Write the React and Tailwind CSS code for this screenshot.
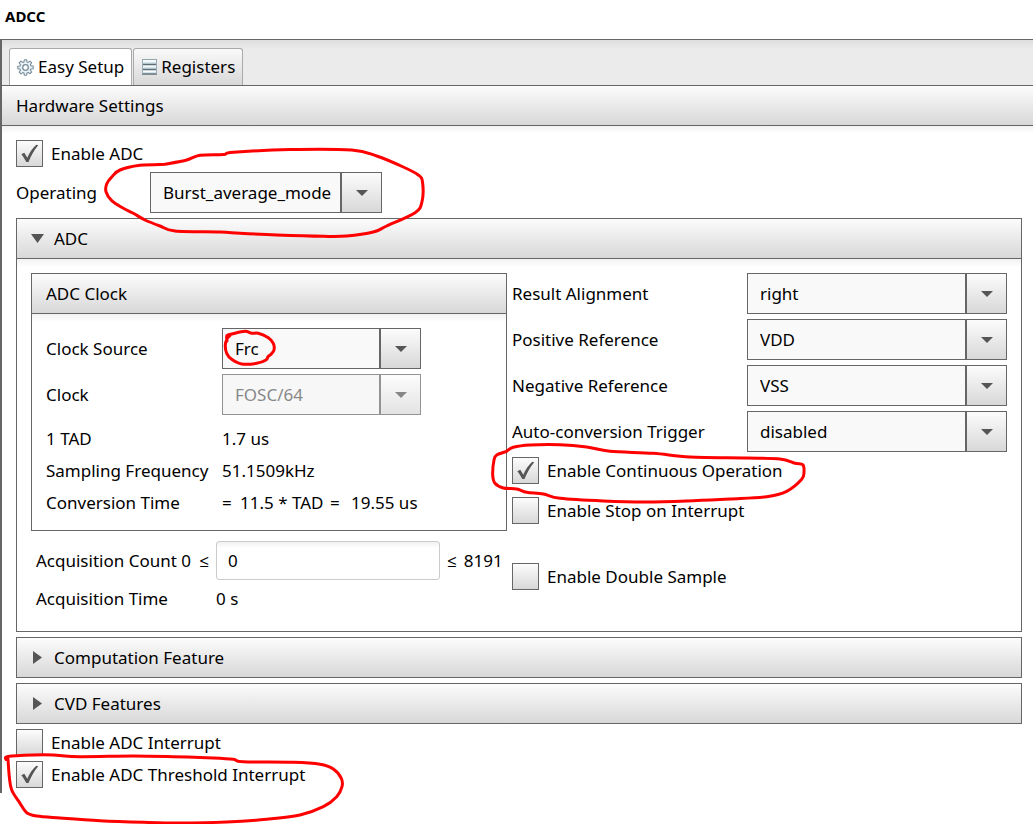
import React, { useId } from "react";

const BAR = "bg-linear-to-b from-[#fcfcfc] to-[#d8d8d8]";

const smooth = (pts) => {
  const n = pts.length;
  let d = `M${pts[0][0]} ${pts[0][1]}`;
  for (let i = 0; i < n - 1; i++) {
    const a = pts[Math.max(i - 1, 0)];
    const b = pts[i];
    const c = pts[i + 1];
    const e = pts[Math.min(i + 2, n - 1)];
    d += `C${b[0] + (c[0] - a[0]) / 6} ${b[1] + (c[1] - a[1]) / 6} ${c[0] - (e[0] - b[0]) / 6} ${c[1] - (e[1] - b[1]) / 6} ${c[0]} ${c[1]}`;
  }
  return d;
};

const MARKS = [
  [[165,164.3],[140,165.3],[120,170],[111.7,177],[106.7,184],[106,191.7],[111.7,200.7],[123.3,208.3],[133.3,213.3],[145,220],[160,226],[175,231],[220,232],[240,233.3],[276.7,235],[323.3,236.3],[346.7,236],[373.3,232],[386.7,226],[415,212.7],[422,201.7],[422.5,182],[418.3,175],[403.3,167],[376.7,156],[351.7,150],[290,149.5],[233.3,152.3],[223.3,154.5],[200,155.3],[186.7,160],[165,164.3]],
  [[227,341],[227,335.5],[233,333.7],[245,331.3],[251.7,333.3],[258.3,333.3],[268.3,337.7],[273.3,343.3],[274,350],[271,354.3],[268,356.7],[266,360],[256.7,363.3],[241.7,364],[231.7,359.3],[226.7,353.3],[225.3,345],[227.3,338.3],[230,335.5]],
  [[506.7,451.3],[513.3,447.3],[530,445],[560,444.7],[586.7,447],[610,451.3],[653.3,453.3],[690,457],[746.7,458],[780,459],[795,463.3],[802.7,464.7],[804,471.7],[801.7,479.3],[786.7,491.3],[766.7,496.7],[730,499],[693.3,500.7],[646.7,502],[603.3,501],[560,498.3],[543.3,494],[526.7,492.3],[516.7,489],[503.3,488],[495,483.3],[492.7,475],[494,460],[496.7,455],[506.7,451.3]],
  [[6,759.5],[8,756.5],[33.3,755],[53.3,755],[80,756.7],[133.3,756],[173.3,756.7],[213.3,758],[233.3,759.3],[243.3,761.7],[293.3,762.3],[320,764.3],[333.3,769],[341.3,778.3],[342,786.7],[336.7,796.7],[323.3,806.7],[300,815],[266.7,819.3],[226.7,822],[180,823],[143.3,822.3],[100,820.7],[60,818],[36.7,816],[26.7,812.7],[20,803.3],[11.7,790],[9.3,776.7],[8,759]],
];

function Marks() {
  return (
    <svg className="pointer-events-none absolute top-0 left-0" width="1033" height="824" fill="none" stroke="#ff0000" strokeWidth="3" strokeLinecap="round" strokeLinejoin="round" aria-hidden="true">
      {MARKS.map((m, i) => <path key={i} d={smooth(m)} />)}
    </svg>
  );
}

function GearIcon() {
  return (
    <svg width="17" height="17" viewBox="0 0 17 17" fill="none" stroke="#788e9b" aria-hidden="true">
      <path fill="#e9f1f5" strokeWidth="1.1" strokeLinejoin="round" d="M7.300 .7h2.400l.3 2.200 1.200.5 1.800-1.300 1.700 1.700-1.300 1.800.5 1.200 2.300.3v2.600l-2.300.3-.5 1.200 1.300 1.800-1.700 1.700-1.800-1.300-1.200.5-.3 2.300H7.300L7 14.100l-1.200-.5L4 14.900l-1.800-1.900 1.300-1.800L3 10 .8 9.700V7.300L3 7l.5-1.200L2.200 4 4 2.100l1.800 1.300L7 2.900z" />
      <circle cx="8.500" cy="8.500" r="2.800" strokeWidth="1.300" fill="#fff" />
    </svg>
  );
}

function RegistersIcon() {
  return (
    <svg width="15" height="16" viewBox="0 0 15 16" aria-hidden="true">
      <path d="M.5 1h14v14H.5z" fill="#f4fafc" />
      <path d="M1 3h13v2H1zM1 8h13v2H1zM1 13h13v1H1z" fill="#d3e3ea" />
      <path d="M0 .5h15" stroke="#93a5ae" fill="none" />
      <path d="M0 5.500h15M0 10.500h15M0 15h15" stroke="#5d6d76" strokeWidth="1.500" fill="none" />
      <path d="M.5 1v14M14.500 1v14" stroke="#9aabb5" fill="none" />
    </svg>
  );
}

function Check({ label, checked = false }) {
  const id = useId();
  return (
    <div className="flex h-[27px] items-center gap-2">
      <span className="grid size-[27px] shrink-0">
        <input id={id} type="checkbox" defaultChecked={checked} className="peer col-start-1 row-start-1 size-[27px] appearance-none border border-[#666] bg-linear-to-b from-[#fcfcfc] to-[#d8d8d8]" />
        <svg viewBox="0 0 27 27" className="pointer-events-none invisible col-start-1 row-start-1 size-[27px] peer-checked:visible" aria-hidden="true">
          <path d="M5.300 14.200 8.300 12.800 11.300 17.800C13.500 12.500 16.500 8 20.300 4.700L22.200 5.200C17.800 10.500 14.800 16 12.500 22H10.300C8.800 19 7.300 16.500 5.300 14.200z" fill="#555" />
        </svg>
      </span>
      <label htmlFor={id} className="whitespace-nowrap">{label}</label>
    </div>
  );
}

function Drop({ id, value, disabled = false }) {
  return (
    <span className={disabled ? "grid w-full opacity-70" : "grid w-full"}>
      <select id={id} disabled={disabled} defaultValue={value} className="col-start-1 row-start-1 h-[41px] w-full appearance-none border border-[#666] bg-[#f9f9f9] pr-12 pl-3 text-black opacity-100 disabled:bg-[#f4f4f4] disabled:text-[#555]">
        <option value={value}>{value}</option>
      </select>
      <span className={`pointer-events-none col-start-1 row-start-1 flex h-[41px] w-[42px] items-center justify-center justify-self-end border border-l-2 border-[#666] ${BAR}`}>
        <svg width="12" height="6" viewBox="0 0 12 6" aria-hidden="true"><path d="M0 0h12L6 6z" fill="#555" /></svg>
      </span>
    </span>
  );
}

function Fold({ title, open = false }) {
  return (
    <button type="button" aria-expanded={open} className={`flex h-[41px] w-full items-center gap-[10px] border border-[#666] pl-[14px] text-left ${BAR}`}>
      <svg width="13" height="13" viewBox="0 0 13 13" fill="#555" aria-hidden="true">
        {open ? <path d="M0 2h13L6.500 11z" /> : <path d="M2 0v13l9-6.500z" />}
      </svg>
      {title}
    </button>
  );
}

const REFERENCES = [
  ["Result Alignment", "right"],
  ["Positive Reference", "VDD"],
  ["Negative Reference", "VSS"],
  ["Auto-conversion Trigger", "disabled"],
];

export default function App() {
  return (
    <div className="relative bg-white pb-[31px] font-['Noto_Sans','Open_Sans',sans-serif] text-[17px] leading-6 text-black">
      <h1 className="flex h-[39px] items-start px-[5px] pt-1 text-[15px] leading-6 font-bold">ADCC</h1>

      <main className="border-t border-l-2 border-[#666] pb-[5px]">
        <div role="tablist" className="flex h-[45px] items-end gap-px bg-linear-to-b from-[#dedede] to-[#ebebeb] to-20% pl-[7px]">
          <button role="tab" aria-selected="true" type="button" className="flex h-[37px] items-center gap-1 rounded-t-[3px] border border-b-0 border-[#aaa] bg-white px-[7px]">
            <GearIcon />
            Easy Setup
          </button>
          <button role="tab" aria-selected="false" type="button" className="flex h-[37px] items-center gap-1 rounded-t-[3px] border border-b-0 border-[#aaa] bg-linear-to-b from-[#fafafa] to-[#d8d8d8] pr-[7px] pl-2">
            <RegistersIcon />
            Registers
          </button>
        </div>

        <h2 className={`flex h-[41px] items-center border-y border-[#666] px-[14px] ${BAR}`}>Hardware Settings</h2>

        <div className="flex flex-col gap-[5px] bg-linear-to-b from-[#f2f2f2] to-white to-[8px] pt-[14px] pr-[11px] pl-[14px]">
          <Check label="Enable ADC" checked />
          <div className="flex items-center">
            <label htmlFor="mode" className="w-[134px] shrink-0">Operating</label>
            <div className="w-[232px]"><Drop id="mode" value="Burst_average_mode" /></div>
          </div>

          <section>
            <Fold title="ADC" open />
            <div className="grid grid-cols-[476px_minmax(0,1fr)] gap-x-[5px] border border-t-0 border-[#666] bg-linear-to-b from-[#f2f2f2] to-white to-[8px] p-[14px] pb-[18px]">
              <div>
                <section className="border border-[#666]">
                  <h3 className={`flex h-10 items-center border-b border-[#666] px-[14px] ${BAR}`}>ADC Clock</h3>
                  <div className="bg-linear-to-b from-[#f2f2f2] to-white to-[8px] p-[14px] pb-[11px]">
                    <div className="grid grid-cols-[176px_199px] items-center gap-y-[5px]">
                      <label htmlFor="source">Clock Source</label>
                      <Drop id="source" value="Frc" />
                      <label htmlFor="clock">Clock</label>
                      <Drop id="clock" value="FOSC/64" disabled />
                    </div>
                    <dl className="mt-2 grid grid-cols-[176px_1fr] leading-8">
                      <dt>1 TAD</dt>
                      <dd>1.7 us</dd>
                      <dt>Sampling Frequency</dt>
                      <dd>51.1509kHz</dd>
                      <dt>Conversion Time</dt>
                      <dd className="flex">
                        <span className="w-[18px]">=</span>
                        <span className="w-[90px]">11.5 * TAD</span>
                        <span className="w-[21px]">=</span>
                        <span>19.55 us</span>
                      </dd>
                    </dl>
                  </div>
                </section>
                <div className="mt-[10px] grid grid-cols-[180px_224px_1fr] items-center gap-y-[5px] pl-[5px]">
                  <label htmlFor="count" className="flex justify-between pr-[7px] whitespace-nowrap"><span>Acquisition Count 0</span><span>≤</span></label>
                  <input id="count" type="text" defaultValue="0" className="h-[39px] w-full rounded-[3px] border border-[#ccc] bg-linear-to-b from-[#f0f0f0] to-white to-[6px] px-[11px]" />
                  <span className="flex gap-[7px] pl-[7px] whitespace-nowrap"><span>≤</span><span>8191</span></span>
                  <span className="leading-7">Acquisition Time</span>
                  <span className="leading-7">0 s</span>
                </div>
              </div>

              <div>
                <div className="grid grid-cols-[235px_minmax(0,1fr)] items-center gap-y-[5px]">
                  {REFERENCES.map(([name, value]) => (
                    <React.Fragment key={name}>
                      <label htmlFor={`ref-${value}`}>{name}</label>
                      <Drop id={`ref-${value}`} value={value} />
                    </React.Fragment>
                  ))}
                </div>
                <div className="mt-[5px] flex flex-col gap-[13px]">
                  <Check label="Enable Continuous Operation" checked />
                  <Check label="Enable Stop on Interrupt" />
                </div>
                <div className="mt-[39px]">
                  <Check label="Enable Double Sample" />
                </div>
              </div>
            </div>
          </section>

          <Fold title="Computation Feature" />
          <Fold title="CVD Features" />
          <Check label="Enable ADC Interrupt" />
          <Check label="Enable ADC Threshold Interrupt" checked />
        </div>
      </main>
      <Marks />
    </div>
  );
}
